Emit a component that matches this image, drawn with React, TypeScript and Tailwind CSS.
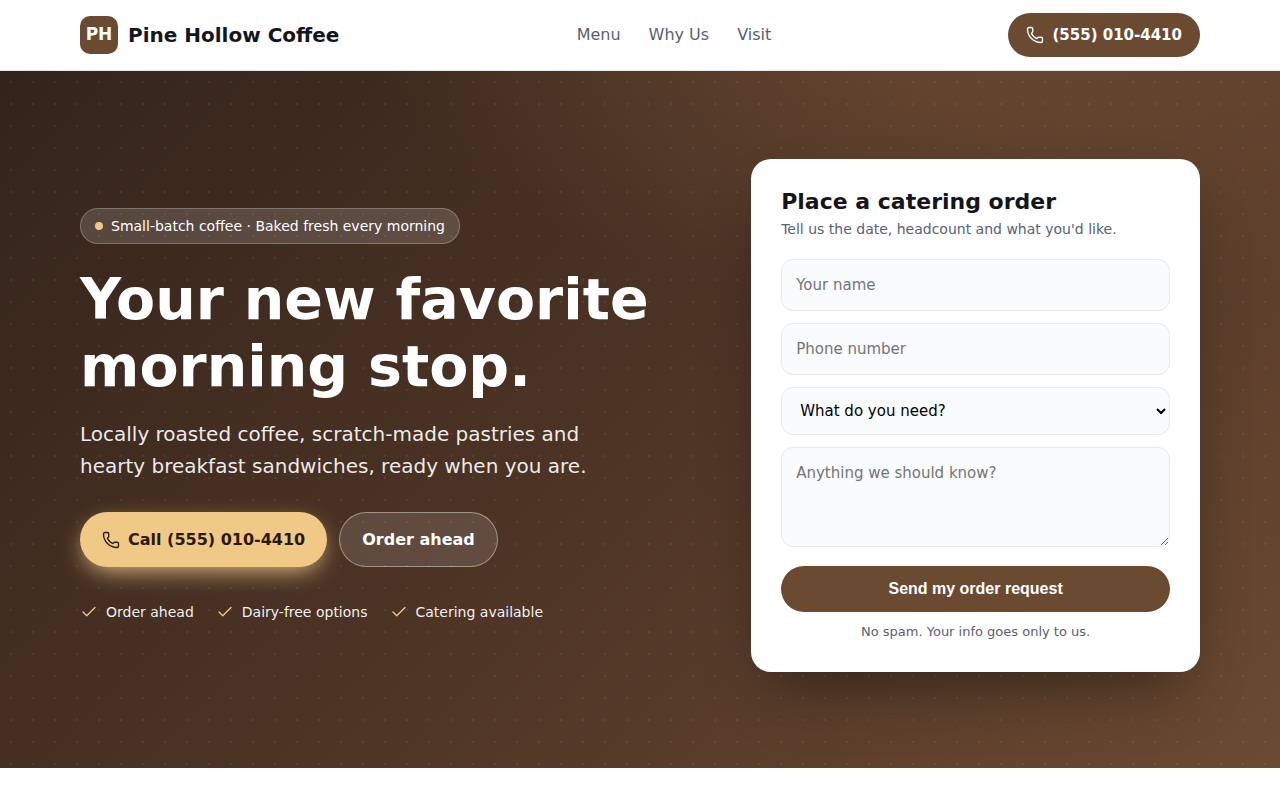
import type { ReactNode } from 'react';
import { Check, Phone } from 'lucide-react';

const PHONE_LABEL = '(555) 010-4410';
const PHONE_HREF = 'tel:+15550104410';

const navLinks = [
  { label: 'Menu', href: '#menu' },
  { label: 'Why Us', href: '#why-us' },
  { label: 'Visit', href: '#visit' },
];

const perks = ['Order ahead', 'Dairy-free options', 'Catering available'];

const fieldClass =
  'block w-full rounded-xl border border-[#e6e8ec] bg-[#fafbfd] px-3.5 text-[15px] leading-[22px] text-black placeholder:text-[#757575]';

function Container({ children, className = '' }: { children: ReactNode; className?: string }) {
  return <div className={`mx-auto w-full max-w-[1168px] px-6 ${className}`}>{children}</div>;
}

function SiteHeader() {
  return (
    <header className="border-b border-[#e6e8ec] bg-white">
      <Container className="flex items-center justify-between py-[13px]">
        <a href="#top" className="flex items-center gap-2.5 text-xl font-bold text-[#14161c]">
          <span className="grid size-[38px] place-items-center rounded-[10px] bg-[#6b4a32] pb-0.5 text-[17px] leading-6 text-white">
            PH
          </span>
          Pine Hollow Coffee
        </a>
        <nav className="flex gap-7 text-base text-[#5a6072]">
          {navLinks.map((link) => (
            <a key={link.href} href={link.href}>
              {link.label}
            </a>
          ))}
        </nav>
        <a
          href={PHONE_HREF}
          className="flex items-center gap-2 rounded-full bg-[#6b4a32] px-[18px] py-2.5 text-[15px] leading-6 font-bold text-white"
        >
          <Phone size={18} strokeWidth={1.8} />
          {PHONE_LABEL}
        </a>
      </Container>
    </header>
  );
}

function HeroCopy() {
  return (
    <div>
      <span className="inline-flex items-center gap-2 rounded-full border border-white/25 bg-white/15 px-3.5 py-1.5 text-sm leading-[22px] text-white">
        <span className="size-2 rounded-full bg-[#f0c987]" />
        Small-batch coffee · Baked fresh every morning
      </span>
      <h1 className="mt-[22px] text-[57px] leading-[67px] font-bold text-white">Your new favorite morning stop.</h1>
      <p className="mt-[18px] max-w-[540px] text-xl leading-8 text-white/92">
        Locally roasted coffee, scratch-made pastries and hearty breakfast sandwiches, ready when you are.
      </p>
      <div className="mt-[30px] flex flex-wrap gap-3 text-base leading-[25px] font-bold">
        <a
          href={PHONE_HREF}
          className="flex items-center gap-2 rounded-full bg-[#f0c987] px-[22px] py-[15px] text-[#2a1a0c] shadow-[0_8px_24px_-6px_#f0c987]"
        >
          <Phone size={18} strokeWidth={1.8} />
          Call {PHONE_LABEL}
        </a>
        <a href="#order" className="flex items-center rounded-full border border-white/40 bg-white/12 px-[22px] text-white">
          Order ahead
        </a>
      </div>
      <ul className="mt-[34px] flex flex-wrap gap-x-[22px] gap-y-2 text-sm leading-[22px] text-white/95">
        {perks.map((perk) => (
          <li key={perk} className="flex items-center gap-2">
            <Check size={18} strokeWidth={1.8} className="text-[#f0c987]" />
            {perk}
          </li>
        ))}
      </ul>
    </div>
  );
}

function OrderForm() {
  return (
    <form id="order" className="rounded-[20px] bg-white p-[30px] shadow-[0_30px_60px_-20px_rgba(0,0,0,0.45)]">
      <h2 className="text-[22px] leading-[26px] font-bold text-[#14161c]">Place a catering order</h2>
      <p className="mt-[3px] text-sm leading-[22px] text-[#5a6072]">Tell us the date, headcount and what you'd like.</p>
      <div className="mt-[19px] grid gap-3">
        <input type="text" aria-label="Your name" placeholder="Your name" className={`${fieldClass} h-[52px]`} />
        <input type="tel" aria-label="Phone number" placeholder="Phone number" className={`${fieldClass} h-[52px]`} />
        <select aria-label="What do you need?" className={`${fieldClass} h-12`}>
          <option>What do you need?</option>
        </select>
        <textarea
          aria-label="Anything we should know?"
          placeholder="Anything we should know?"
          className={`${fieldClass} h-[100px] resize-y py-3.5`}
        />
      </div>
      <button
        type="submit"
        className="mt-[19px] w-full rounded-full bg-[#6b4a32] py-3.5 font-['Liberation_Sans',sans-serif] text-base leading-[18px] font-bold text-white"
      >
        Send my order request
      </button>
      <p className="mt-2.5 text-center text-[13px] leading-5 text-[#5a6072]">No spam. Your info goes only to us.</p>
    </form>
  );
}

export default function App() {
  return (
    <div id="top" className="min-h-screen bg-white font-['DejaVu_Sans',sans-serif]">
      <SiteHeader />
      <main className="bg-[radial-gradient(1100px_540px_at_80%_-10%,#6b4a32,transparent_60%),linear-gradient(135deg,#33241b,#503626_55%,#6b4a32)]">
        <div className="bg-[radial-gradient(rgba(255,255,255,0.07)_1px,transparent_1px)] bg-[size:22px_22px]">
          <Container className="grid items-center gap-16 pt-[88px] pb-24 lg:grid-cols-[1.15fr_0.85fr]">
            <HeroCopy />
            <OrderForm />
          </Container>
        </div>
      </main>
    </div>
  );
}
